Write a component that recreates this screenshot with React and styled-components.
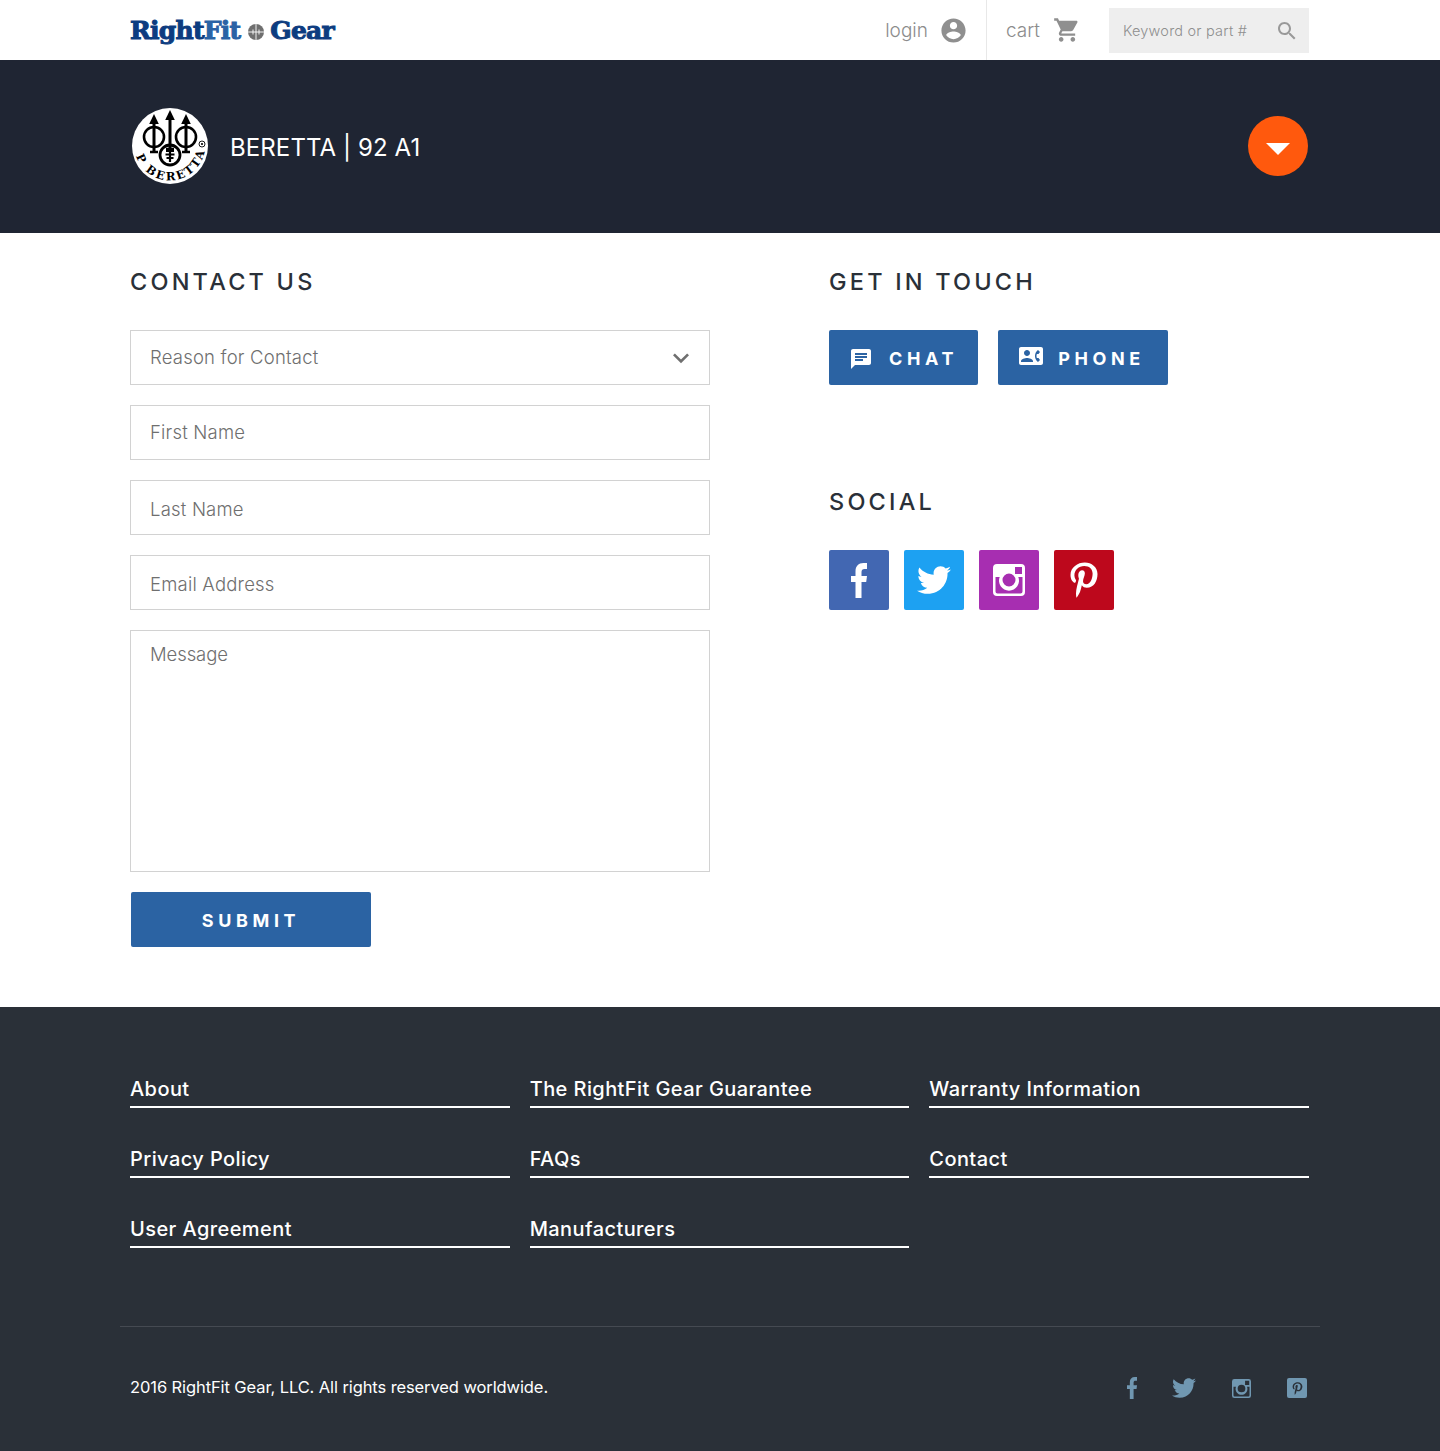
import React from "react";
import styled, { createGlobalStyle } from "styled-components";
import { FaTwitter, FaPinterestP } from "react-icons/fa";

const GlobalStyle = createGlobalStyle`
  * { box-sizing: border-box; }
  body { margin: 0; background: #fff; font-family: Inter, "Noto Sans", sans-serif; }
`;

const Inner = styled.div`
  width: 1179px;
  margin-left: 130px;
`;

const TopBar = styled.header`
  height: 60px;
  background: #fff;
`;

const TopInner = styled(Inner)`
  height: 60px;
  display: flex;
  align-items: center;
`;

const Logo = styled.a`
  display: flex;
  align-items: center;
  width: 206px;
  height: 60px;
  font-family: "DejaVu Serif", serif;
  font-weight: 700;
  font-size: 25px;
  letter-spacing: -0.75px;
  color: #0d3c80;
  -webkit-text-stroke: 1px currentColor;
  white-space: nowrap;
`;

const LogoAccent = styled.span`
  color: #2a62a5;
`;

const LogoMark = styled.svg`
  width: 16px;
  height: 16px;
  margin: 3px 6px 0 8px;
  flex: none;
`;

const TopActions = styled.nav`
  margin-left: auto;
  display: flex;
  align-items: center;
  height: 60px;
`;

const TopLink = styled.a`
  display: flex;
  align-items: center;
  height: 60px;
  gap: ${(p) => p.$gap}px;
  padding-right: ${(p) => p.$right}px;
  padding-left: ${(p) => p.$left}px;
  border-right: ${(p) => (p.$divider ? "1px solid #e8e8e8" : "none")};
  font-size: 19px;
  font-weight: 300;
  color: #8c8c8c;
`;

const Search = styled.div`
  width: 200px;
  height: 45px;
  margin-top: 1px;
  padding: 0 10px 0 14px;
  background: #eee;
  display: flex;
  align-items: center;
  justify-content: space-between;
  font-size: 14.5px;
  font-weight: 300;
  letter-spacing: 0.2px;
  color: #8f8f8f;
`;

const Band = styled.section`
  height: 173px;
  background: #1f2533;
`;

const BandInner = styled(Inner)`
  height: 173px;
  display: flex;
  align-items: center;
`;

const Brand = styled.svg`
  width: 78px;
  height: 78px;
  margin-left: 1px;
  margin-top: -1px;
  flex: none;
`;

const BandTitle = styled.h1`
  margin: 2px 0 0 21px;
  font-size: 24px;
  font-weight: 400;
  letter-spacing: 0.1px;
  color: #fff;
`;

const RoundButton = styled.button`
  width: 60px;
  height: 60px;
  margin: -2px 1px 0 auto;
  padding: 0;
  border: none;
  border-radius: 50%;
  background: #ff590d;
  display: flex;
  align-items: center;
  justify-content: center;
  &::after {
    content: "";
    margin-top: 6px;
    border-top: 12px solid #fff;
    border-left: 12px solid transparent;
    border-right: 12px solid transparent;
  }
`;

const Main = styled(Inner)`
  height: 774px;
  padding-top: 35px;
  display: flex;
`;

const FormColumn = styled.div`
  width: 699px;
`;

const SideColumn = styled.div`
  flex: 1;
`;

const Heading = styled.h2`
  margin: 0;
  height: 28px;
  line-height: 28px;
  font-size: 23.5px;
  font-weight: 500;
  letter-spacing: 3.2px;
  color: #2a3038;
`;

const Form = styled.form`
  width: 580px;
  margin-top: 34px;
  display: flex;
  flex-direction: column;
  gap: 20px;
`;

const fieldCss = `
  display: block;
  width: 100%;
  border: 1px solid #d2d2d2;
  border-radius: 0;
  background: #fff;
  font-family: Inter, "Noto Sans", sans-serif;
  font-size: 18.5px;
  font-weight: 300;
  letter-spacing: 0.2px;
  color: #6f6f6f;
  outline: none;
  &::placeholder { color: #6f6f6f; opacity: 1; }
`;

const SelectWrap = styled.div`
  position: relative;
`;

const Select = styled.select`
  ${fieldCss}
  height: 55px;
  padding: 0 19px 2px;
  appearance: none;
`;

const Chevron = styled.svg`
  position: absolute;
  top: 12px;
  right: 13px;
  width: 32px;
  height: 32px;
  fill: #6f6f6f;
  pointer-events: none;
`;

const Input = styled.input`
  ${fieldCss}
  height: 55px;
  padding: ${(p) => p.$top || 0}px 19px ${(p) => p.$bottom || 0}px;
`;

const TextArea = styled.textarea`
  ${fieldCss}
  height: 242px;
  padding: 11px 19px 0;
  line-height: 24px;
  letter-spacing: -0.1px;
  resize: none;
`;

const BlueButton = styled.button`
  height: 55px;
  width: ${(p) => p.$width}px;
  margin-left: ${(p) => p.$left || 0}px;
  padding: 2px ${(p) => p.$right || 0}px 0 0;
  border: none;
  border-radius: 2px;
  background: #2b63a3;
  color: #fff;
  font-family: Inter, "Noto Sans", sans-serif;
  font-size: 18px;
  font-weight: 700;
  letter-spacing: 4.6px;
  display: flex;
  align-items: center;
  justify-content: center;
  gap: ${(p) => p.$gap || 16}px;
  svg { fill: #fff; flex: none; }
`;

const ButtonRow = styled.div`
  margin-top: 34px;
  display: flex;
  gap: 20px;
`;

const SocialHeading = styled(Heading)`
  margin-top: 103px;
`;

const SocialRow = styled.div`
  margin-top: 34px;
  display: flex;
  gap: 15px;
`;

const SocialTile = styled.a`
  width: 60px;
  height: 60px;
  border-radius: 2px;
  background: ${(p) => p.$bg};
  color: #fff;
  font-size: ${(p) => p.$size}px;
  display: flex;
  align-items: center;
  justify-content: center;
`;

const Footer = styled.footer`
  height: 444px;
  background: #2a3038;
  padding-top: 60px;
`;

const LinkGrid = styled(Inner)`
  height: 259px;
  display: grid;
  grid-template-columns: repeat(3, 1fr);
  grid-auto-rows: 41px;
  column-gap: 20px;
  row-gap: 29px;
`;

const FooterLink = styled.a`
  display: flex;
  align-items: flex-end;
  padding-bottom: 5px;
  border-bottom: 2px solid #fff;
  font-size: 20px;
  font-weight: 500;
  line-height: 24px;
  letter-spacing: 0.42px;
  color: #fff;
`;

const Rule = styled.hr`
  width: 1200px;
  height: 1px;
  margin: 0 0 0 120px;
  border: none;
  background: #454a52;
`;

const BottomRow = styled(Inner)`
  height: 122px;
  display: flex;
  align-items: center;
  justify-content: space-between;
`;

const Copyright = styled.p`
  margin: -2px 0 0;
  font-size: 16.5px;
  font-weight: 400;
  letter-spacing: -0.1px;
  color: #fff;
`;

const FooterIcons = styled.div`
  display: flex;
  align-items: center;
  color: #7097b1;
  font-size: 24px;
`;

const FooterIcon = styled.a`
  display: flex;
  justify-content: center;
  width: ${(p) => p.$width}px;
  margin-left: ${(p) => p.$gap}px;
`;

const PinSquare = styled.a`
  width: 20px;
  height: 20px;
  margin: 0 2px 0 36px;
  border-radius: 2px;
  background: #7097b1;
  color: #2a3038;
  font-size: 13px;
  display: flex;
  align-items: center;
  justify-content: center;
`;

// material icons used by the site
const ICONS = {
  account: "M12 2C6.48 2 2 6.48 2 12s4.48 10 10 10 10-4.48 10-10S17.52 2 12 2zm0 3c1.66 0 3 1.34 3 3s-1.34 3-3 3-3-1.34-3-3 1.34-3 3-3zm0 14.2c-2.5 0-4.71-1.28-6-3.22.03-1.99 4-3.08 6-3.08 1.99 0 5.97 1.09 6 3.08-1.29 1.94-3.5 3.22-6 3.22z",
  cart: "M7 18c-1.1 0-1.99.9-1.99 2S5.9 22 7 22s2-.9 2-2-.9-2-2-2zM1 2v2h2l3.6 7.59-1.35 2.45c-.16.28-.25.61-.25.96 0 1.1.9 2 2 2h12v-2H7.42c-.14 0-.25-.11-.25-.25l.03-.12.9-1.63h7.45c.75 0 1.41-.41 1.75-1.03l3.58-6.49c.08-.14.12-.31.12-.48 0-.55-.45-1-1-1H5.21l-.94-2H1zm16 16c-1.1 0-1.99.9-1.99 2s.89 2 1.99 2 2-.9 2-2-.9-2-2-2z",
  search: "M15.5 14h-.79l-.28-.27C15.41 12.59 16 11.11 16 9.5 16 5.91 13.09 3 9.5 3S3 5.91 3 9.5 5.91 16 9.5 16c1.61 0 3.09-.59 4.23-1.57l.27.28v.79l5 4.99L20.49 19l-4.99-5zm-6 0C7.01 14 5 11.99 5 9.5S7.01 5 9.5 5 14 7.01 14 9.5 11.99 14 9.5 14z",
  chat: "M20 2H4c-1.1 0-1.99.9-1.99 2L2 22l4-4h14c1.1 0 2-.9 2-2V4c0-1.1-.9-2-2-2zM6 9h12v2H6V9zm8 5H6v-2h8v2zm4-6H6V6h12v2z",
  phone: "M22 3H2C.9 3 0 3.9 0 5v14c0 1.1.9 2 2 2h20c1.1 0 1.99-.9 1.99-2L24 5c0-1.1-.9-2-2-2zM8 6c1.66 0 3 1.34 3 3s-1.34 3-3 3-3-1.34-3-3 1.34-3 3-3zm6 12H2v-1c0-2 4-3.1 6-3.1s6 1.1 6 3.1v1zm3.85-4h1.64L21 16l-1.99 1.99c-1.31-.98-2.28-2.38-2.73-3.99-.18-.64-.28-1.31-.28-2s.1-1.36.28-2c.45-1.62 1.42-3.01 2.73-3.99L21 8l-1.51 2h-1.64c-.22.63-.35 1.3-.35 2s.13 1.37.35 2z",
};

const Icon = ({ name, size, color, style }) => (
  <svg width={size} height={size} viewBox="0 0 24 24" fill={color} style={style}>
    <path d={ICONS[name]} />
  </svg>
);

const FacebookF = ({ height }) => (
  <svg height={height} viewBox="0 0 16 35" fill="currentColor">
    <path d="M4.5 35V19H0v-6h4.5V8.5C4.5 3 7.5 0 12.5 0H16v6h-2.5c-2 0-3 1-3 3v4H16l-.8 6h-4.7v16z" />
  </svg>
);

const OldInstagram = ({ size }) => (
  <svg width={size} height={size} viewBox="0 0 32 32" fill="currentColor">
    <path
      fillRule="evenodd"
      d="M4 0h24a4 4 0 0 1 4 4v24a4 4 0 0 1-4 4H4a4 4 0 0 1-4-4V4a4 4 0 0 1 4-4zM22 3v7h7V3h-7zM2.5 13v14.5a2 2 0 0 0 2 2h23a2 2 0 0 0 2-2V13h-4.2a10 10 0 1 1-18.6 0H2.5zM16 9.5a6.5 6.5 0 1 0 0 13 6.5 6.5 0 0 0 0-13z"
    />
  </svg>
);

const Reticle = () => (
  <LogoMark viewBox="0 0 16 16">
    <circle cx="8" cy="8" r="8" fill="#6f6f6f" />
    <path d="M8 0v16M0 8h16M5 5.5v5M11 5.5v5" stroke="#fff" strokeWidth="0.9" />
  </LogoMark>
);

const Arrow = ({ x, top, bottom }) => (
  <g>
    <path d={`M${x} ${top}l4.8 10h-9.6z`} fill="#000" />
    <path d={`M${x} ${top + 6}V${bottom}`} stroke="#000" strokeWidth="3" />
    <path d={`M${x - 4} ${bottom}h8`} stroke="#000" strokeWidth="2.5" />
  </g>
);

const BerettaLogo = () => (
  <Brand viewBox="0 0 78 78">
    <circle cx="39" cy="39" r="38" fill="#fff" />
    <Arrow x={23} top={7} bottom={45} />
    <Arrow x={39} top={3} bottom={42} />
    <Arrow x={55} top={7} bottom={45} />
    <circle cx="23" cy="30" r="10" fill="none" stroke="#000" strokeWidth="2.6" />
    <circle cx="55" cy="30" r="10" fill="none" stroke="#000" strokeWidth="2.6" />
    <circle cx="39" cy="48" r="10" fill="none" stroke="#000" strokeWidth="2.8" />
    <path d="M39 41v14M35 44h8M34.5 47.5h9M35.5 51h7" stroke="#000" strokeWidth="2.2" />
    <defs>
      <path id="beretta-arc" d="M5 49A35.5 35.5 0 0 0 74 42" />
    </defs>
    <text fontFamily="'DejaVu Serif', serif" fontWeight="700" fontSize="11.5" fill="#000">
      <textPath href="#beretta-arc" textLength="93" lengthAdjust="spacing">P BERETTA</textPath>
    </text>
    <circle cx="71" cy="37" r="3" fill="none" stroke="#000" strokeWidth="0.9" />
    <circle cx="71" cy="37" r="1.1" fill="#000" />
  </Brand>
);

const FOOTER_LINKS = [
  "About",
  "The RightFit Gear Guarantee",
  "Warranty Information",
  "Privacy Policy",
  "FAQs",
  "Contact",
  "User Agreement",
  "Manufacturers",
];

const App = () => {
  return (
    <>
      <GlobalStyle />
      <TopBar>
        <TopInner>
          <Logo>
            Right<LogoAccent>Fit</LogoAccent>
            <Reticle />
            Gear
          </Logo>
          <TopActions>
            <TopLink $gap={11} $left={0} $right={18} $divider>
              login
              <Icon name="account" size={29} color="#8f8f8f" />
            </TopLink>
            <TopLink $gap={13} $left={19} $right={28}>
              cart
              <Icon name="cart" size={28} color="#8f8f8f" />
            </TopLink>
            <Search>
              Keyword or part #
              <Icon name="search" size={24} color="#999" />
            </Search>
          </TopActions>
        </TopInner>
      </TopBar>

      <Band>
        <BandInner>
          <BerettaLogo />
          <BandTitle>BERETTA | 92 A1</BandTitle>
          <RoundButton aria-label="Change" />
        </BandInner>
      </Band>

      <Main>
        <FormColumn>
          <Heading>CONTACT US</Heading>
          <Form>
            <SelectWrap>
              <Select defaultValue="">
                <option value="">Reason for Contact</option>
              </Select>
              <Chevron viewBox="0 0 24 24">
                <path d="M7.41 8.59 12 13.17l4.59-4.58L18 10l-6 6-6-6z" />
              </Chevron>
            </SelectWrap>
            <Input placeholder="First Name" $bottom={2} />
            <Input placeholder="Last Name" $top={2} />
            <Input placeholder="Email Address" $top={2} />
            <TextArea placeholder="Message" />
            <BlueButton type="button" $width={240} $left={1}>SUBMIT</BlueButton>
          </Form>
        </FormColumn>
        <SideColumn>
          <Heading>GET IN TOUCH</Heading>
          <ButtonRow>
            <BlueButton type="button" $width={149}>
              <Icon name="chat" size={24} style={{ marginTop: 1 }} />
              CHAT
            </BlueButton>
            <BlueButton type="button" $width={170} $gap={15} $right={2}>
              <Icon name="phone" size={24} style={{ marginTop: -5 }} />
              PHONE
            </BlueButton>
          </ButtonRow>
          <SocialHeading>SOCIAL</SocialHeading>
          <SocialRow>
            <SocialTile $bg="#4267b2"><FacebookF height={35} /></SocialTile>
            <SocialTile $bg="#1da1f2" $size={34}><FaTwitter /></SocialTile>
            <SocialTile $bg="#a72eb1"><OldInstagram size={32} /></SocialTile>
            <SocialTile $bg="#bd081c" $size={36}><FaPinterestP /></SocialTile>
          </SocialRow>
        </SideColumn>
      </Main>

      <Footer>
        <LinkGrid>
          {FOOTER_LINKS.map((label) => (
            <FooterLink key={label}>{label}</FooterLink>
          ))}
        </LinkGrid>
        <Rule />
        <BottomRow>
          <Copyright>2016 RightFit Gear, LLC. All rights reserved worldwide.</Copyright>
          <FooterIcons>
            <FooterIcon $width={12} $gap={0}><FacebookF height={22} /></FooterIcon>
            <FooterIcon $width={24} $gap={34}><FaTwitter /></FooterIcon>
            <FooterIcon $width={20} $gap={35}><OldInstagram size={19} /></FooterIcon>
            <PinSquare><FaPinterestP /></PinSquare>
          </FooterIcons>
        </BottomRow>
      </Footer>
    </>
  );
};

export default App;
